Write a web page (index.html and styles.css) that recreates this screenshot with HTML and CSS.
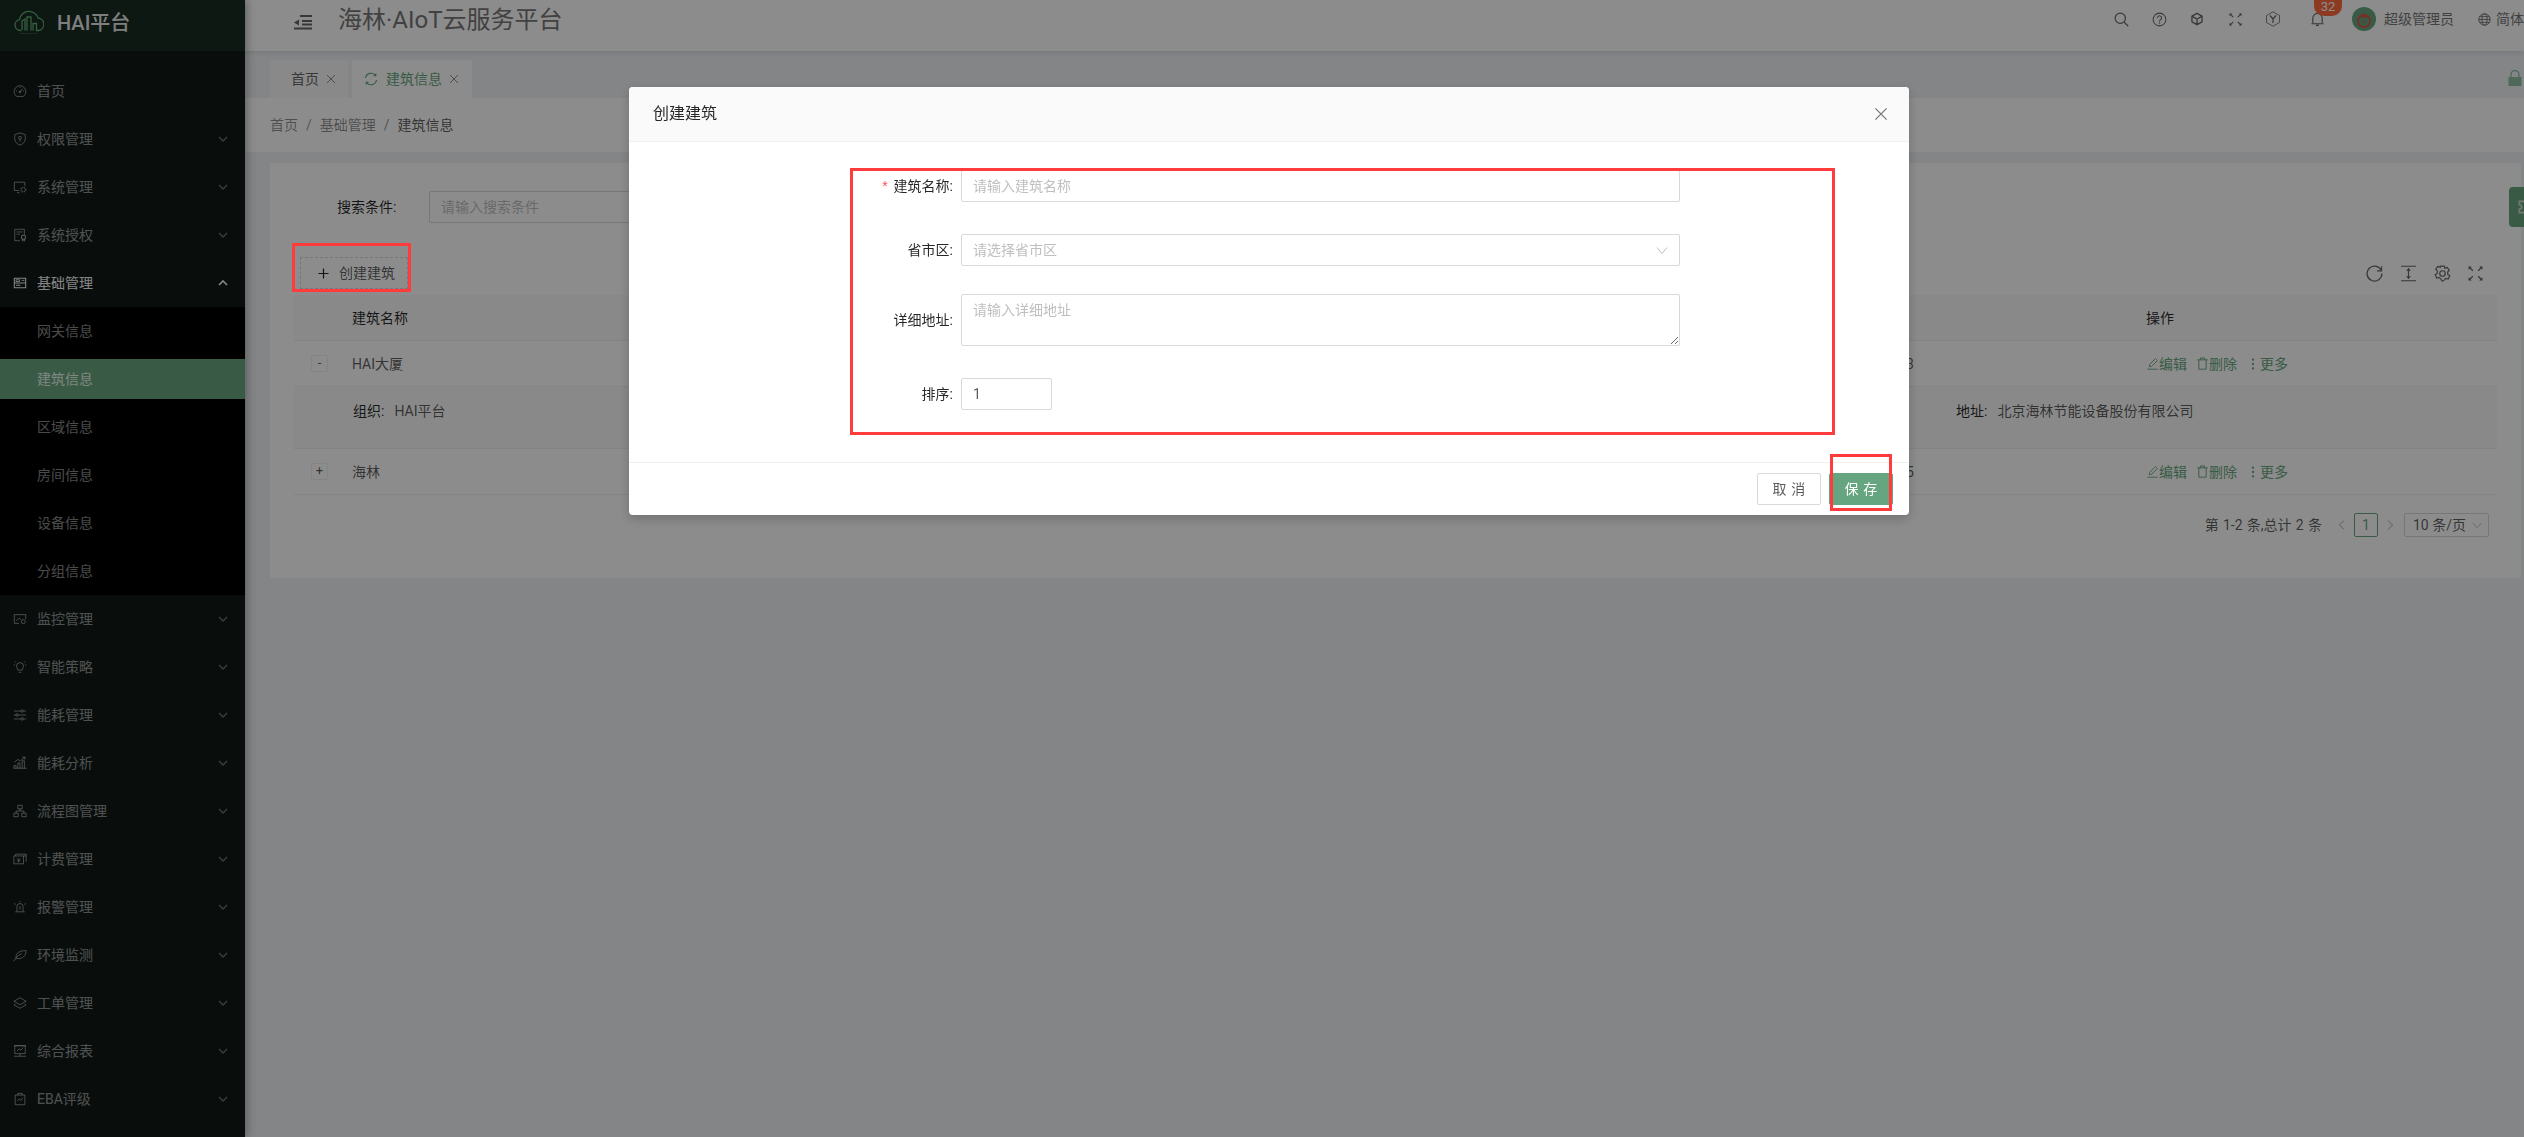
FILE: index.html
```html
<!DOCTYPE html>
<html lang="zh-CN">
<head>
<meta charset="utf-8">
<title>海林·AIoT云服务平台</title>
<link rel="stylesheet" href="styles.css">
</head>
<body>
<svg class="defs" xmlns="http://www.w3.org/2000/svg">
  <symbol id="i-down" viewBox="0 0 12 12"><path d="M2 4l4 4 4-4" fill="none" stroke="currentColor" stroke-width="1.5"/></symbol>
  <symbol id="i-up" viewBox="0 0 12 12"><path d="M2 8l4-4 4 4" fill="none" stroke="currentColor" stroke-width="1.7"/></symbol>
  <symbol id="i-gauge" viewBox="0 0 16 16"><path d="M4.2 14.2h7.6a6.7 6.7 0 1 0-7.6 0zM8 9l3-3.6M8 3.4v1.2M3.4 8h1.2M12.6 8h-1.2" fill="none" stroke="currentColor"/><circle cx="8" cy="9" r="1" fill="none" stroke="currentColor"/></symbol>
  <symbol id="i-shield" viewBox="0 0 16 16"><path d="M8 1l6 2v5.2c0 3-2.6 5.6-6 6.8-3.4-1.2-6-3.8-6-6.8V3z" fill="none" stroke="currentColor"/><circle cx="8" cy="6.6" r="1.7" fill="none" stroke="currentColor"/><path d="M8 8.3v2.7" stroke="currentColor"/></symbol>
  <symbol id="i-monitor" viewBox="0 0 16 16"><path d="M7 12H1.500V2.500h12V7M4.500 14.500h3" fill="none" stroke="currentColor"/><circle cx="11.800" cy="11" r="2.600" fill="none" stroke="currentColor" stroke-width="1.500" stroke-dasharray="1.200 .8"/></symbol>
  <symbol id="i-file" viewBox="0 0 16 16"><path d="M8 14.500H2V1.500h11v6M4 4.500h7M4 7h4" fill="none" stroke="currentColor"/><circle cx="12" cy="10.500" r="2.400" fill="none" stroke="currentColor" stroke-width="1.300"/><path d="M10.800 12.500v2.500l1.200-.8 1.200.8v-2.500" fill="none" stroke="currentColor"/></symbol>
  <symbol id="i-base" viewBox="0 0 16 16"><path d="M1.500 2.500h13v11h-13zM1.500 8h13M3.500 10.500h5" fill="none" stroke="currentColor" stroke-width="1.200"/><path d="M3.500 4.300h4v2h-4zM10 5h3" fill="none" stroke="currentColor"/></symbol>
  <symbol id="i-screen" viewBox="0 0 16 16"><path d="M7 13H1.500V3h13v5" fill="none" stroke="currentColor"/><path d="M4 10l3-3 2 1.500" fill="none" stroke="currentColor"/><circle cx="11.800" cy="11" r="2.300" fill="none" stroke="currentColor"/></symbol>
  <symbol id="i-bulb" viewBox="0 0 16 16"><path d="M5.500 11.500c0-2-1.500-2.200-1.500-4.500a4 4 0 0 1 8 0c0 2.300-1.500 2.500-1.500 4.500zM6.500 14h3M.8 5.500l1.500.5M15.200 5.500l-1.500.5M2 1.800l1.200 1M14 1.800l-1.200 1" fill="none" stroke="currentColor"/></symbol>
  <symbol id="i-sliders" viewBox="0 0 16 16"><path d="M1 3.500h8M12 3.500h3M1 8h2M6 8h9M1 12.500h8M12 12.500h3" stroke="currentColor"/><circle cx="10.500" cy="3.500" r="1.400" fill="none" stroke="currentColor"/><circle cx="4.500" cy="8" r="1.400" fill="none" stroke="currentColor"/><circle cx="10.500" cy="12.500" r="1.400" fill="none" stroke="currentColor"/></symbol>
  <symbol id="i-bars" viewBox="0 0 16 16"><path d="M1 14v-3h2.500v3M5.500 14V8H8v6M10.500 14V5.500H13V14M.5 14h15M1.500 7l4-3 3 1.500 5-4M10.500 1.200h3.200v3" fill="none" stroke="currentColor"/></symbol>
  <symbol id="i-flow" viewBox="0 0 16 16"><path d="M5.500 1.500h5v4h-5zM1 10.500h5v4H1zM10 10.500h5v4h-5zM8 5.500V8M3.500 10.500V8h9v2.500" fill="none" stroke="currentColor"/></symbol>
  <symbol id="i-bill" viewBox="0 0 16 16"><path d="M1 4.500h14M3 4.500V2.500h12V11M1 4.500v9h11v-9" fill="none" stroke="currentColor"/><path d="M4.500 7l2 2 2-2M6.500 9v3M4.700 10h3.600" fill="none" stroke="currentColor"/></symbol>
  <symbol id="i-alarm" viewBox="0 0 16 16"><path d="M4.500 13V7.500a3.500 3.500 0 0 1 7 0V13M2.500 13.500h11M8 7v4M1 4l2 1M15 4l-2 1M8 1v1.500" fill="none" stroke="currentColor"/></symbol>
  <symbol id="i-leaf" viewBox="0 0 16 16"><path d="M3.500 11C3 6 7 3 15 3c0 6-4 10-11 9zM1 15c2-4 5-7 9-8.500" fill="none" stroke="currentColor"/></symbol>
  <symbol id="i-layers" viewBox="0 0 16 16"><path d="M8 2L15 6 8 10 1 6zM2.500 9L1 10l7 4 7-4-1.500-1" fill="none" stroke="currentColor"/></symbol>
  <symbol id="i-report" viewBox="0 0 16 16"><path d="M2 2h12v9H2zM1 2h14M1 14h14M8 11v3M4.500 8l2.500-2.500 2 1.500 2.500-3" fill="none" stroke="currentColor"/></symbol>
  <symbol id="i-clip" viewBox="0 0 16 16"><path d="M2.500 3.500h11v11h-11zM5.500 3.500V1.500h5v2M5 10l2-2 2 1.500 2-3" fill="none" stroke="currentColor"/></symbol>
  <symbol id="i-indent" viewBox="0 0 18 16"><path d="M6 2h12M8 7h10M8 10.500h10M0 14.500h18" stroke="currentColor" stroke-width="1.800" fill="none"/><path d="M5 5.500v6L0 8.500z" fill="currentColor"/></symbol>
  <symbol id="i-search" viewBox="0 0 16 16"><circle cx="6.700" cy="6.700" r="5.500" fill="none" stroke="currentColor" stroke-width="1.300"/><path d="M10.800 10.800l4.400 4.400" stroke="currentColor" stroke-width="1.300"/></symbol>
  <symbol id="i-help" viewBox="0 0 16 16"><circle cx="8" cy="8" r="6.800" fill="none" stroke="currentColor" stroke-width="1.100"/><path d="M5.800 6.300a2.200 2.200 0 1 1 3.500 1.800C8.500 8.700 8 9 8 10" fill="none" stroke="currentColor" stroke-width="1.100"/><circle cx="8" cy="11.800" r=".8" fill="currentColor"/></symbol>
  <symbol id="i-cube" viewBox="0 0 16 16"><path d="M8 1.500l5.800 3.200v6.600L8 14.500l-5.800-3.200V4.700zM2.500 5L8 8l5.500-3M8 8v6.300" fill="none" stroke="currentColor" stroke-width="1.500"/></symbol>
  <symbol id="i-expand" viewBox="0 0 14 14"><path d="M1 1l3.500 3.500M13 1L9.500 4.500M1 13l3.500-3.500M13 13L9.500 9.500" stroke="currentColor" stroke-width="1.200"/><path d="M.5.500h3L.5 3.500zM13.500.500h-3l3 3zM.5 13.500h3l-3-3zM13.500 13.500h-3l3-3z" fill="currentColor"/></symbol>
  <symbol id="i-hex" viewBox="0 0 16 16"><path d="M8 .8l6.500 3.700v7L8 15.200l-6.500-3.700v-7z" fill="none" stroke="currentColor" stroke-width=".8"/><path d="M5 4.500L8 8l3-3.500M8 8v4" fill="none" stroke="currentColor" stroke-width="1.200"/></symbol>
  <symbol id="i-bell" viewBox="0 0 14 16"><path d="M2 11.800V6.500a5 5 0 0 1 10 0v5.300M.5 12.500h13" fill="none" stroke="currentColor" stroke-width="1.200"/><path d="M5.500 14.200h3" stroke="currentColor" stroke-width="1.600"/></symbol>
  <symbol id="i-globe" viewBox="0 0 16 16"><circle cx="8" cy="8" r="7" fill="none" stroke="currentColor" stroke-width="1.100"/><ellipse cx="8" cy="8" rx="3.200" ry="7" fill="none" stroke="currentColor"/><path d="M1 8h14M2 4.500h12M2 11.500h12" stroke="currentColor"/></symbol>
  <symbol id="i-close" viewBox="0 0 12 12"><path d="M1.200 1.200l9.600 9.600M10.800 1.200l-9.600 9.600" stroke="currentColor" fill="none"/></symbol>
  <symbol id="i-sync" viewBox="0 0 14 14"><path d="M1.500 6A5.600 5.600 0 0 1 11.500 3.500M12.500 8A5.600 5.600 0 0 1 2.500 10.500" fill="none" stroke="currentColor" stroke-width="1.200"/><path d="M12.300 1v3.300H9M1.700 13V9.700H5" fill="currentColor"/></symbol>
  <symbol id="i-lock" viewBox="0 0 14 16"><path d="M3 7V4.500a4 4 0 0 1 8 0V7" fill="none" stroke="currentColor" stroke-width="1.300"/><path d="M.5 7h13v9H.5z" fill="currentColor"/></symbol>
  <symbol id="i-plus" viewBox="0 0 12 12"><path d="M6 .5v11M.5 6h11" stroke="currentColor" stroke-width="1.300"/></symbol>
  <symbol id="i-reload" viewBox="0 0 16 16"><path d="M14.300 5A7 7 0 1 0 15 8" fill="none" stroke="currentColor" stroke-width="1.200"/><path d="M14.600 1.200v4.300h-4.200" fill="none" stroke="currentColor" stroke-width="1.200"/></symbol>
  <symbol id="i-height" viewBox="0 0 14 16"><path d="M0 1.200h14M0 14.800h14M7 3v10" stroke="currentColor" stroke-width="1.100"/><path d="M4.800 5.500L7 2.800l2.200 2.700zM4.800 10.500L7 13.200l2.200-2.700z" fill="currentColor"/></symbol>
  <symbol id="i-gear" viewBox="0 0 16 16"><path d="M6.300 1h3.400l.5 2.200 2-1 2.200 2.700-1.500 1.700.1 2.300 1.900 1.200-1.500 3.100-2.200-.6-1.700 1.600L8.500 15h-1l-1-1.800-1.700-1.600-2.200.6L1.100 9.100 3 7.900l.1-2.300-1.500-1.700 2.200-2.700 2 1z" fill="none" stroke="currentColor" stroke-width="1.100"/><circle cx="8" cy="8" r="2.600" fill="none" stroke="currentColor" stroke-width="1.100"/></symbol>
  <symbol id="i-edit" viewBox="0 0 14 16"><path d="M.5 15h13M3 12l.6-3L10.500 2l2.500 2.400-7 7z" fill="none" stroke="currentColor" stroke-width="1.100"/></symbol>
  <symbol id="i-trash" viewBox="0 0 14 16"><path d="M.5 3.500h13M4.500 3.500V1.200h5v2.300M2.500 3.500V15h9V3.500" fill="none" stroke="currentColor" stroke-width="1.200"/></symbol>
  <symbol id="i-more" viewBox="0 0 4 16"><circle cx="2" cy="3" r="1.300" fill="currentColor"/><circle cx="2" cy="8" r="1.300" fill="currentColor"/><circle cx="2" cy="13" r="1.300" fill="currentColor"/></symbol>
  <symbol id="i-left" viewBox="0 0 12 12"><path d="M8 1.500L3.500 6 8 10.500" fill="none" stroke="currentColor"/></symbol>
  <symbol id="i-right" viewBox="0 0 12 12"><path d="M4 1.500L8.500 6 4 10.500" fill="none" stroke="currentColor"/></symbol>
  <symbol id="i-chev" viewBox="0 0 12 12"><path d="M1 3.500l5 6 5-6" fill="none" stroke="currentColor"/></symbol>
</svg>

<div class="app">
  <aside class="side">
    <div class="brand">
      <svg class="brand-logo" viewBox="0 0 30 26"><path d="M7 22.500H6.500a5.500 5.500 0 0 1-1-10.900A9.500 9.500 0 0 1 24 10a6.300 6.300 0 0 1 .5 12.500H22" fill="none" stroke="currentColor" stroke-width="1.300"/><path d="M8 22.500V13l3-2v11.500M13 22.500V9h4v13.500M19 22.500v-7h3.500v7" fill="none" stroke="currentColor" stroke-width="1.300"/><path d="M6 25.500h18" stroke="currentColor" stroke-width=".8" stroke-dasharray="1.500 1" opacity=".6"/></svg>
      <span class="brand-name">HAI平台</span>
    </div>
    <nav class="menu">
      <a class="item"><svg class="ic"><use href="#i-gauge"/></svg><span>首页</span></a>
      <a class="item"><svg class="ic"><use href="#i-shield"/></svg><span>权限管理</span><svg class="arrow"><use href="#i-down"/></svg></a>
      <a class="item"><svg class="ic"><use href="#i-monitor"/></svg><span>系统管理</span><svg class="arrow"><use href="#i-down"/></svg></a>
      <a class="item"><svg class="ic"><use href="#i-file"/></svg><span>系统授权</span><svg class="arrow"><use href="#i-down"/></svg></a>
      <a class="item item-open"><svg class="ic"><use href="#i-base"/></svg><span>基础管理</span><svg class="arrow"><use href="#i-up"/></svg></a>
      <div class="sub">
        <a class="sub-item">网关信息</a>
        <a class="sub-item sub-active">建筑信息</a>
        <a class="sub-item">区域信息</a>
        <a class="sub-item">房间信息</a>
        <a class="sub-item">设备信息</a>
        <a class="sub-item">分组信息</a>
      </div>
      <a class="item"><svg class="ic"><use href="#i-screen"/></svg><span>监控管理</span><svg class="arrow"><use href="#i-down"/></svg></a>
      <a class="item"><svg class="ic"><use href="#i-bulb"/></svg><span>智能策略</span><svg class="arrow"><use href="#i-down"/></svg></a>
      <a class="item"><svg class="ic"><use href="#i-sliders"/></svg><span>能耗管理</span><svg class="arrow"><use href="#i-down"/></svg></a>
      <a class="item"><svg class="ic"><use href="#i-bars"/></svg><span>能耗分析</span><svg class="arrow"><use href="#i-down"/></svg></a>
      <a class="item"><svg class="ic"><use href="#i-flow"/></svg><span>流程图管理</span><svg class="arrow"><use href="#i-down"/></svg></a>
      <a class="item"><svg class="ic"><use href="#i-bill"/></svg><span>计费管理</span><svg class="arrow"><use href="#i-down"/></svg></a>
      <a class="item"><svg class="ic"><use href="#i-alarm"/></svg><span>报警管理</span><svg class="arrow"><use href="#i-down"/></svg></a>
      <a class="item"><svg class="ic"><use href="#i-leaf"/></svg><span>环境监测</span><svg class="arrow"><use href="#i-down"/></svg></a>
      <a class="item"><svg class="ic"><use href="#i-layers"/></svg><span>工单管理</span><svg class="arrow"><use href="#i-down"/></svg></a>
      <a class="item"><svg class="ic"><use href="#i-report"/></svg><span>综合报表</span><svg class="arrow"><use href="#i-down"/></svg></a>
      <a class="item"><svg class="ic"><use href="#i-clip"/></svg><span>EBA评级</span><svg class="arrow"><use href="#i-down"/></svg></a>
    </nav>
  </aside>

  <main class="main">
    <header class="top">
      <svg class="top-toggle"><use href="#i-indent"/></svg>
      <h1 class="top-title">海林·AIoT云服务平台</h1>
      <div class="top-right">
        <span class="top-btn"><svg class="ic-15"><use href="#i-search"/></svg></span>
        <span class="top-btn"><svg class="ic-15"><use href="#i-help"/></svg></span>
        <span class="top-btn"><svg class="ic-14"><use href="#i-cube"/></svg></span>
        <span class="top-btn"><svg class="ic-13"><use href="#i-expand"/></svg></span>
        <span class="top-btn"><svg class="ic-16"><use href="#i-hex"/></svg></span>
        <span class="top-btn top-bell"><svg class="ic-15"><use href="#i-bell"/></svg><b class="badge">32</b></span>
        <span class="avatar"><svg viewBox="0 0 24 24"><circle cx="12" cy="14" r="6" fill="none" stroke="#d05a4c" stroke-width="1.800"/><path d="M8 10c1-4 7-4 8 0zM10 15h4" fill="#d05a4c" stroke="#d05a4c"/></svg></span>
        <span class="user">超级管理员</span>
        <svg class="globe"><use href="#i-globe"/></svg>
        <span class="lang">简体</span>
      </div>
    </header>

    <div class="tabs">
      <div class="tab"><span>首页</span><svg class="tab-x"><use href="#i-close"/></svg></div>
      <div class="tab tab-active"><svg class="tab-sync"><use href="#i-sync"/></svg><span>建筑信息</span><svg class="tab-x"><use href="#i-close"/></svg></div>
      <svg class="tab-lock"><use href="#i-lock"/></svg>
    </div>

    <div class="crumbs">
      <span>首页</span><i>/</i><span>基础管理</span><i>/</i><span class="crumb-cur">建筑信息</span>
    </div>

    <section class="card">
      <div class="search">
        <label class="search-label">搜索条件:</label>
        <input class="search-input" placeholder="请输入搜索条件">
      </div>
      <div class="toolbar">
        <button class="btn-dash"><svg class="ic-11"><use href="#i-plus"/></svg><span>创建建筑</span></button>
        <div class="tools">
          <svg class="ic-17"><use href="#i-reload"/></svg>
          <svg class="ic-17"><use href="#i-height"/></svg>
          <svg class="ic-17"><use href="#i-gear"/></svg>
          <svg class="ic-15"><use href="#i-expand"/></svg>
        </div>
      </div>
      <div class="table">
        <div class="row row-head">
          <div></div><div class="c-name">建筑名称</div><div></div><div></div><div>操作</div>
        </div>
        <div class="row">
          <div class="c-exp"><span class="exp">-</span></div><div class="c-name">HAI大厦</div><div class="c-date">2023-06-14 09:21:33</div><div></div>
          <div class="ops"><a><svg class="ic-13"><use href="#i-edit"/></svg>编辑</a><a><svg class="ic-13"><use href="#i-trash"/></svg>删除</a><a class="op-more"><svg class="dots"><use href="#i-more"/></svg>更多</a></div>
        </div>
        <div class="row-detail">
          <div></div><div class="d-org"><b>组织:</b>HAI平台</div><div><b>地址:</b>北京海林节能设备股份有限公司</div>
        </div>
        <div class="row">
          <div class="c-exp"><span class="exp">+</span></div><div class="c-name">海林</div><div class="c-date">2023-06-14 09:24:15</div><div></div>
          <div class="ops"><a><svg class="ic-13"><use href="#i-edit"/></svg>编辑</a><a><svg class="ic-13"><use href="#i-trash"/></svg>删除</a><a class="op-more"><svg class="dots"><use href="#i-more"/></svg>更多</a></div>
        </div>
      </div>
      <div class="pager">
        <span class="pager-total">第 1-2 条,总计 2 条</span>
        <svg class="pager-arrow"><use href="#i-left"/></svg>
        <span class="pager-cur">1</span>
        <svg class="pager-arrow"><use href="#i-right"/></svg>
        <span class="pager-size">10 条/页<svg class="pager-chev"><use href="#i-chev"/></svg></span>
      </div>
    </section>
  </main>
</div>

<div class="side-tab"><svg viewBox="0 0 16 16"><path d="M3 3h10v3a2 2 0 0 0 0 4v3H3v-3a2 2 0 0 0 0-4z" fill="none" stroke="#d8d8d8" stroke-width="1.400"/></svg></div>

<div class="mask"></div>

<div class="modal">
  <div class="modal-head">
    <span>创建建筑</span>
    <svg class="modal-x"><use href="#i-close"/></svg>
  </div>
  <div class="modal-body">
    <div class="field">
      <label class="f-label"><em>*</em>建筑名称:</label>
      <input class="f-input" placeholder="请输入建筑名称">
    </div>
    <div class="field field-tight">
      <label class="f-label">省市区:</label>
      <div class="f-input f-select"><span>请选择省市区</span><svg class="f-chev"><use href="#i-chev"/></svg></div>
    </div>
    <div class="field">
      <label class="f-label f-label-top">详细地址:</label>
      <textarea class="f-input f-area" placeholder="请输入详细地址"></textarea>
    </div>
    <div class="field">
      <label class="f-label">排序:</label>
      <input class="f-input f-num" value="1">
    </div>
  </div>
  <div class="modal-foot">
    <button class="btn">取消</button>
    <button class="btn btn-primary">保存</button>
  </div>
</div>

<div class="mark mark-create"></div>
<div class="mark mark-form"></div>
<div class="mark mark-save"></div>
</body>
</html>
```
FILE: styles.css
```css
* { box-sizing: border-box; }
html, body { margin: 0; height: 100%; }
body {
  font-family: Roboto, "Noto Sans CJK SC", "Liberation Sans", sans-serif;
  font-size: 14px;
  line-height: 22px;
  color: rgba(0, 0, 0, .65);
  background: #f0f2f5;
  overflow: hidden;
}
.defs { display: none; }
svg { display: block; }
a { color: inherit; text-decoration: none; }
b { font-weight: 400; }

.app { display: flex; height: 100vh; }

/* sidebar */
.side {
  flex: 0 0 245px;
  background: #121b19;
  color: rgba(255, 255, 255, .55);
  box-shadow: 2px 0 8px rgba(29, 35, 41, .35);
  position: relative;
  z-index: 2;
}
.brand {
  height: 51px;
  display: flex;
  align-items: center;
  padding: 0 0 6px 14px;
  background: #192c23;
}
.brand-logo { width: 30px; height: 26px; color: #5fae73; margin-top: -4px; }
.brand-name { margin-left: 13px; font-size: 20px; font-weight: 500; color: #e6e6e6; line-height: 26px; }
.menu { display: flex; flex-direction: column; padding-top: 16px; }
.item {
  display: flex;
  align-items: center;
  height: 40px;
  margin: 4px 0;
  padding: 0 16px 0 13px;
}
.item span { flex: 1; margin-left: 10px; }
.ic { width: 14px; height: 14px; flex: none; }
.arrow { width: 12px; height: 12px; flex: none; opacity: .65; }
.item-open { color: #f2f2f2; }
.item-open .arrow { opacity: 1; }
.sub { background: #000; display: flex; flex-direction: column; }
.sub-item { display: block; height: 40px; line-height: 40px; margin: 4px 0; padding-left: 37px; }
.sub-active { background: #68a77f; color: rgba(255, 255, 255, .88); }

/* main */
.main { flex: 1; min-width: 0; display: flex; flex-direction: column; }
.top {
  height: 51px;
  flex: none;
  background: #fff;
  display: flex;
  align-items: center;
  padding: 0 0 11px 49px;
  box-shadow: 0 1px 6px rgba(0, 21, 41, .12);
  position: relative;
  z-index: 1;
}
.top-toggle { width: 18px; height: 16px; color: #666; margin-top: 4px; }
.top-title { margin: 0 0 0 26px; font-size: 24px; line-height: 32px; font-weight: 400; color: #777; }
.top-right { margin-left: auto; display: flex; align-items: center; color: #666; margin-top: -2px; }
.top-btn { width: 38px; height: 30px; display: flex; align-items: center; justify-content: center; position: relative; }
.ic-15 { width: 15px; height: 15px; }
.ic-13 { width: 13px; height: 13px; }
.ic-11 { width: 11px; height: 11px; }
.ic-14 { width: 14px; height: 14px; }
.ic-16 { width: 16px; height: 16px; }
.ic-17 { width: 17px; height: 17px; }
.top-bell { margin-left: 6px; }
.badge {
  position: absolute;
  left: 16px;
  top: -4px;
  min-width: 28px;
  height: 16px;
  padding: 0 6px;
  border-radius: 0 0 10px 10px;
  background: #ff6a3c;
  color: #fff;
  font-size: 13px;
  line-height: 14px;
  text-align: center;
}
.avatar { width: 24px; height: 24px; border-radius: 50%; background: #68a77f; margin-left: 16px; }
.user { margin-left: 8px; color: #777; white-space: nowrap; }
.globe { width: 13px; height: 13px; margin-left: 24px; }
.lang { margin-left: 5px; color: #777; white-space: nowrap; }

/* tabs */
.tabs { height: 47px; flex: none; display: flex; align-items: flex-end; padding-left: 25px; gap: 4px; position: relative; }
.tab {
  height: 38px;
  width: 78px;
  padding: 0 0 0 21px;
  display: flex;
  align-items: center;
  background: #fafafa;
  border-radius: 2px 2px 0 0;
  color: #666;
}
.tab-active { width: 120px; padding-left: 12px; background: #fff; color: #68a77f; }
.tab-sync { width: 14px; height: 14px; margin-right: 8px; }
.tab-x { width: 10px; height: 10px; margin-left: 7px; color: #777; }
.tab-lock { position: absolute; right: 2px; top: 19px; width: 14px; height: 16px; color: #68a77f; opacity: .7; }

.crumbs {
  height: 54px;
  flex: none;
  background: #fff;
  padding-left: 25px;
  display: flex;
  align-items: center;
  color: rgba(0, 0, 0, .45);
}
.crumbs i { font-style: normal; margin: 0 8px; }
.crumb-cur { color: rgba(0, 0, 0, .65); }

/* card */
.card {
  margin: 11px 3px 0 25px;
  height: 415px;
  background: #fff;
  padding: 28px 24px 0;
}
.search { display: flex; align-items: center; height: 32px; }
.search-label { margin-left: 43px; width: 92px; color: rgba(0, 0, 0, .85); }
.search-input, .f-input {
  height: 32px;
  border: 1px solid #d9d9d9;
  border-radius: 2px;
  padding: 4px 11px;
  font: inherit;
  color: inherit;
  background: #fff;
  outline: 0;
}
.search-input { width: 320px; }
::placeholder { color: #bfbfbf; opacity: 1; }
.toolbar { display: flex; align-items: center; justify-content: space-between; margin-top: 34px; height: 32px; padding-left: 6px; }
.btn-dash {
  height: 32px;
  width: 108px;
  border: 1px dashed #d9d9d9;
  background: #fff;
  font: inherit;
  color: inherit;
  display: flex;
  align-items: center;
  padding: 0 0 0 17px;
  gap: 10px;
}
.btn-dash svg { color: rgba(0, 0, 0, .85); }
.tools { display: flex; align-items: center; gap: 17px; padding-right: 14px; color: #666; }

.table { margin-top: 6px; }
.row, .row-head {
  display: grid;
  grid-template-columns: 58px 300px 1262px 232px 351px;
  align-items: center;
  height: 46px;
  border-bottom: 1px solid #f0f0f0;
}
.row-head { background: #fafafa; color: rgba(0, 0, 0, .85); }
.c-date { text-align: right; white-space: nowrap; }
.c-exp { padding-left: 17px; }
.exp {
  display: block;
  width: 17px;
  height: 17px;
  border: 1px solid #f0f0f0;
  border-radius: 2px;
  line-height: 14px;
  text-align: center;
  font-size: 13px;
}
.row-detail {
  display: grid;
  grid-template-columns: 59px 1603px 1fr;
  height: 62px;
  padding-top: 13px;
  background: #fafafa;
  border-bottom: 1px solid #f0f0f0;
}
.row-detail b { color: rgba(0, 0, 0, .85); margin-right: 10px; }
.ops { display: flex; align-items: center; color: #68a77f; }
.ops a { display: flex; align-items: center; margin-right: 9px; }
.ops .ic-13 { margin-right: 0; }
.op-more { margin-left: 5px; }
.dots { width: 4px; height: 14px; margin-right: 5px; }

.pager { display: flex; align-items: center; justify-content: flex-end; margin-top: 18px; height: 24px; padding-right: 8px; }
.pager-total { margin-right: 14px; white-space: nowrap; word-spacing: .8px; }
.pager-arrow { width: 12px; height: 12px; color: #888; opacity: .7; }
.pager-cur {
  width: 24px;
  height: 24px;
  margin: 0 6px;
  border: 1px solid #68a77f;
  border-radius: 2px;
  color: #68a77f;
  line-height: 22px;
  text-align: center;
}
.pager-size {
  width: 85px;
  height: 24px;
  margin-left: 8px;
  padding-left: 8px;
  border: 1px solid #d9d9d9;
  border-radius: 2px;
  display: flex;
  align-items: center;
  white-space: nowrap;
}
.pager-chev { width: 10px; height: 10px; margin-left: 6px; color: #bbb; }

.side-tab {
  position: fixed;
  right: 0;
  top: 187px;
  width: 15px;
  height: 40px;
  background: #68a77f;
  border-radius: 4px 0 0 4px;
  overflow: hidden;
  padding: 11px 0 0 7px;
}
.side-tab svg { width: 18px; height: 18px; }

.mask { position: fixed; inset: 0; background: rgba(0, 0, 0, .45); z-index: 10; }

/* modal */
.modal {
  position: fixed;
  left: 629px;
  top: 87px;
  width: 1280px;
  height: 428px;
  background: #fff;
  border-radius: 4px;
  z-index: 11;
  box-shadow: 0 4px 12px rgba(0, 0, 0, .2);
  display: flex;
  flex-direction: column;
}
.modal-head {
  height: 55px;
  flex: none;
  background: #fafafa;
  border-bottom: 1px solid #f0f0f0;
  border-radius: 4px 4px 0 0;
  padding: 0 21px 0 24px;
  display: flex;
  align-items: center;
  justify-content: space-between;
  font-size: 16px;
  color: rgba(0, 0, 0, .85);
}
.modal-x { width: 14px; height: 14px; color: #737373; }
.modal-body { flex: 1; padding: 28px 0 0; }
.field { display: flex; align-items: flex-start; margin-bottom: 32px; }
.field-tight { margin-bottom: 28px; }
.f-label { width: 324px; height: 32px; line-height: 32px; text-align: right; color: rgba(0, 0, 0, .85); margin-right: 8px; white-space: nowrap; }
.f-label em { font-style: normal; color: #ff4d4f; margin-right: 6px; font-family: "Liberation Sans", sans-serif; }
.f-label-top { height: 52px; line-height: 52px; }
.f-input { width: 719px; display: block; }
.f-select { display: flex; align-items: center; justify-content: space-between; color: #bfbfbf; }
.f-chev { width: 12px; height: 12px; color: #bfbfbf; }
.f-area { height: 52px; resize: vertical; }
.f-num { width: 91px; }
.modal-foot {
  height: 53px;
  flex: none;
  border-top: 1px solid #f0f0f0;
  display: flex;
  align-items: flex-start;
  justify-content: flex-end;
  padding: 10px 16px 0 0;
  gap: 8px;
}
.btn {
  width: 64px;
  height: 32px;
  border: 1px solid #d9d9d9;
  border-radius: 2px;
  background: #fff;
  font: inherit;
  letter-spacing: .34em;
  text-indent: .34em;
  color: rgba(0, 0, 0, .65);
  padding: 0;
}
.btn-primary { background: #65a57f; border-color: #65a57f; color: #fff; }

/* annotations */
.mark { position: fixed; border: 3px solid #ff3b3b; z-index: 12; }
.mark-create { left: 292px; top: 243px; width: 119px; height: 49px; }
.mark-form { left: 850px; top: 168px; width: 985px; height: 267px; }
.mark-save { left: 1830px; top: 454px; width: 62px; height: 57px; }
```
